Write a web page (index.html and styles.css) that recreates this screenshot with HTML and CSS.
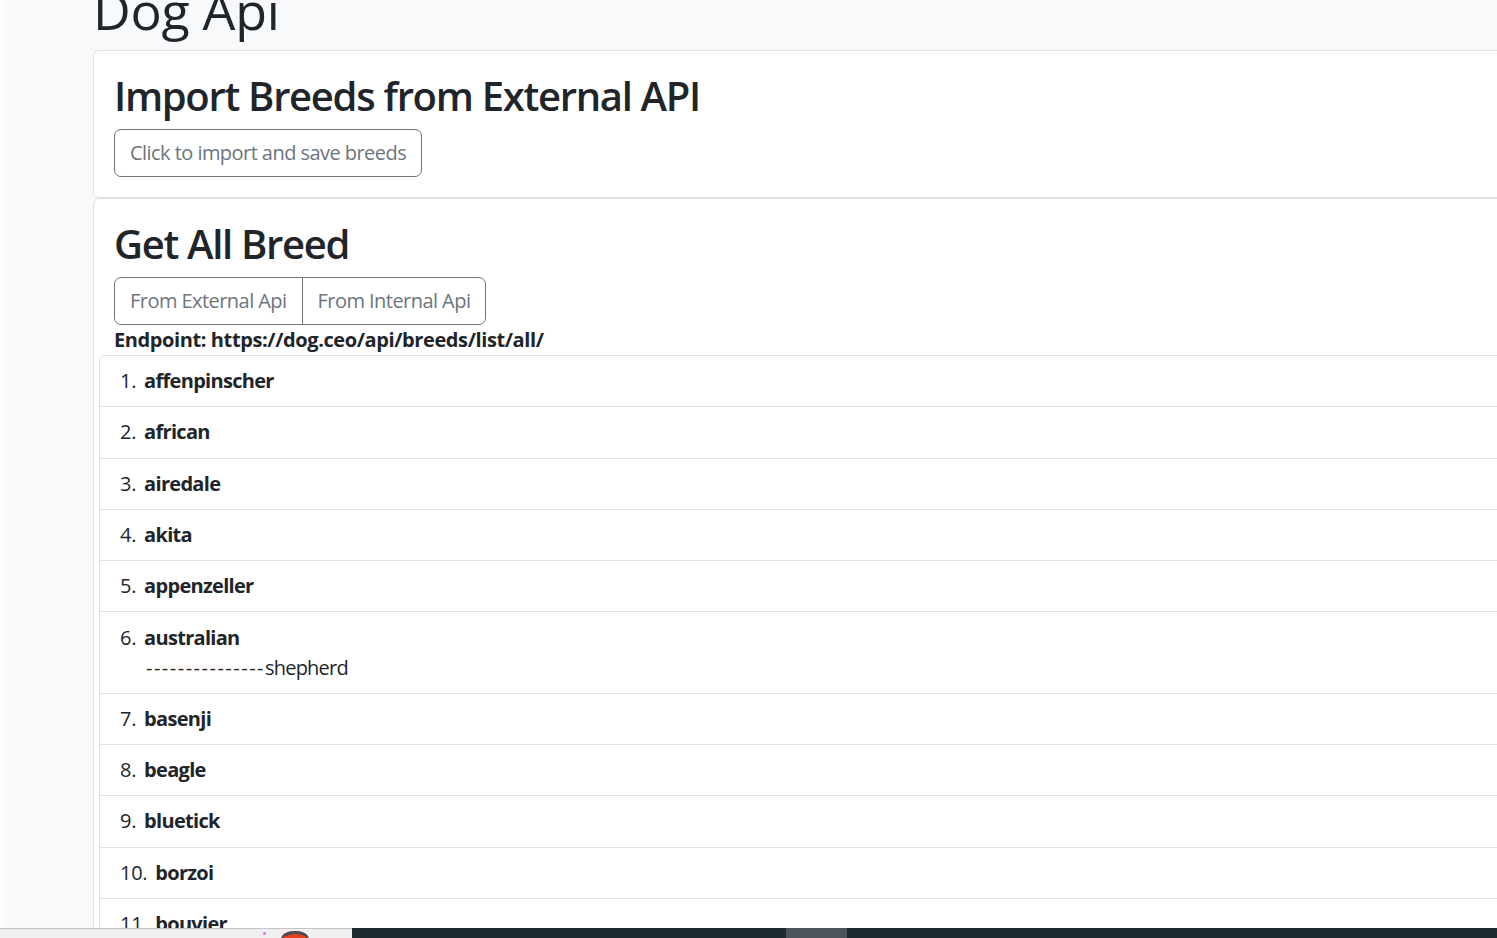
FILE: index.html
```html
<!DOCTYPE html>
<html lang="en">
<head>
<meta charset="utf-8">
<title>Dog Api</title>
<link rel="stylesheet" href="styles.css">
</head>
<body>
<div class="edge"></div>
<main class="container">
  <h1 class="page-title">Dog Api</h1>
  <section class="card">
    <div class="card-body">
      <h2 class="card-title">Import Breeds from External API</h2>
      <button class="btn">Click to import and save breeds</button>
    </div>
  </section>
  <section class="card">
    <div class="card-body">
      <h2 class="card-title">Get All Breed</h2>
      <div class="btn-group">
        <button class="btn">From External Api</button>
        <button class="btn">From Internal Api</button>
      </div>
      <div class="endpoint">Endpoint: https://dog.ceo/api/breeds/list/all/</div>
      <ol class="list-group">
        <li class="list-item"><b>affenpinscher</b></li>
        <li class="list-item"><b>african</b></li>
        <li class="list-item"><b>airedale</b></li>
        <li class="list-item"><b>akita</b></li>
        <li class="list-item"><b>appenzeller</b></li>
        <li class="list-item"><b>australian</b><div class="sub"><span class="dash">---------------</span>shepherd</div></li>
        <li class="list-item"><b>basenji</b></li>
        <li class="list-item"><b>beagle</b></li>
        <li class="list-item"><b>bluetick</b></li>
        <li class="list-item"><b>borzoi</b></li>
        <li class="list-item"><b>bouvier</b></li>
        <li class="list-item"><b>boxer</b></li>
      </ol>
    </div>
  </section>
</main>
<div class="taskbar">
  <div class="tb-left">
    <span class="tb-dot"></span>
    <span class="tb-icon"></span>
  </div>
  <div class="tb-right"><span class="tb-active"></span></div>
</div>
</body>
</html>
```

FILE: styles.css
```css
html, body {
  margin: 0;
  padding: 0;
}
body {
  background: #f8f9fa;
  font-family: "Open Sans", "Noto Sans", sans-serif;
  font-size: 20px;
  line-height: 1.5;
  color: #212529;
  overflow: hidden;
  height: 938px;
  position: relative;
}
.edge {
  position: absolute;
  left: 0;
  top: 0;
  width: 3px;
  height: 100%;
  background: #fdfdfd;
}
.container {
  margin-left: 93px;
  width: 1500px;
}
.page-title {
  font-size: 52px;
  font-weight: 500;
  line-height: 60px;
  letter-spacing: -0.3px;
  margin: -20px 0 10px 0;
}
.card {
  background: #fff;
  border: 1px solid #dfe1e3;
  border-radius: 6px;
}
.card-body {
  padding: 20px;
}
.card-title {
  font-size: 40px;
  font-weight: 600;
  line-height: 48px;
  letter-spacing: -1.3px;
  margin: 0 0 10px 0;
  padding-top: 1px;
  height: 47px;
}
.btn {
  font-family: inherit;
  font-size: 20px;
  line-height: 30px;
  letter-spacing: -0.55px;
  padding: 8px 15px;
  color: #6c757d;
  background: transparent;
  border: 1px solid #6c757d;
  border-radius: 7px;
  display: inline-block;
  margin: 0;
}
.btn-group {
  display: inline-flex;
}
.btn-group .btn:first-child {
  border-top-right-radius: 0;
  border-bottom-right-radius: 0;
}
.btn-group .btn + .btn {
  margin-left: -1px;
  border-top-left-radius: 0;
  border-bottom-left-radius: 0;
}
.endpoint {
  font-weight: 700;
  letter-spacing: -0.4px;
  margin-top: -1px;
  line-height: 31px;
}
.list-group {
  list-style: none;
  counter-reset: item;
  margin: 0 0 0 -15px;
  padding: 0;
  border: 1px solid #dfe1e3;
  border-radius: 6px;
}
.list-item {
  counter-increment: item;
  padding: 10.15px 20px;
  border-top: 1px solid #dfe1e3;
}
.list-item::before {
  content: counter(item) ".";
  margin-right: 8px;
  letter-spacing: -0.3px;
}
.list-item:first-child {
  border-top: 0;
}
.list-item b {
  font-weight: 700;
  letter-spacing: -0.7px;
}
.sub {
  padding-left: 26px;
  letter-spacing: -0.8px;
}
.sub .dash {
  letter-spacing: 1.5px;
}
.taskbar {
  position: absolute;
  left: 0;
  bottom: 0;
  width: 100%;
  height: 10px;
  display: flex;
}
.tb-left {
  width: 352px;
  background: #f0f0f0;
  border-top: 1px solid #c4c4c4;
  position: relative;
}
.tb-dot {
  position: absolute;
  left: 263px;
  top: 3px;
  width: 3px;
  height: 3px;
  border-radius: 50%;
  background: #e070e0;
}
.tb-icon {
  position: absolute;
  left: 281px;
  top: 2px;
  width: 28px;
  height: 16px;
  border-radius: 50%;
  background: #e8401c;
  box-shadow: inset 0 3px 0 #4a4a5a;
}
.tb-right {
  flex: 1;
  background: #1d2b31;
  position: relative;
}
.tb-active {
  position: absolute;
  left: 434px;
  top: 0;
  width: 61px;
  height: 100%;
  background: #4b5559;
}
```
